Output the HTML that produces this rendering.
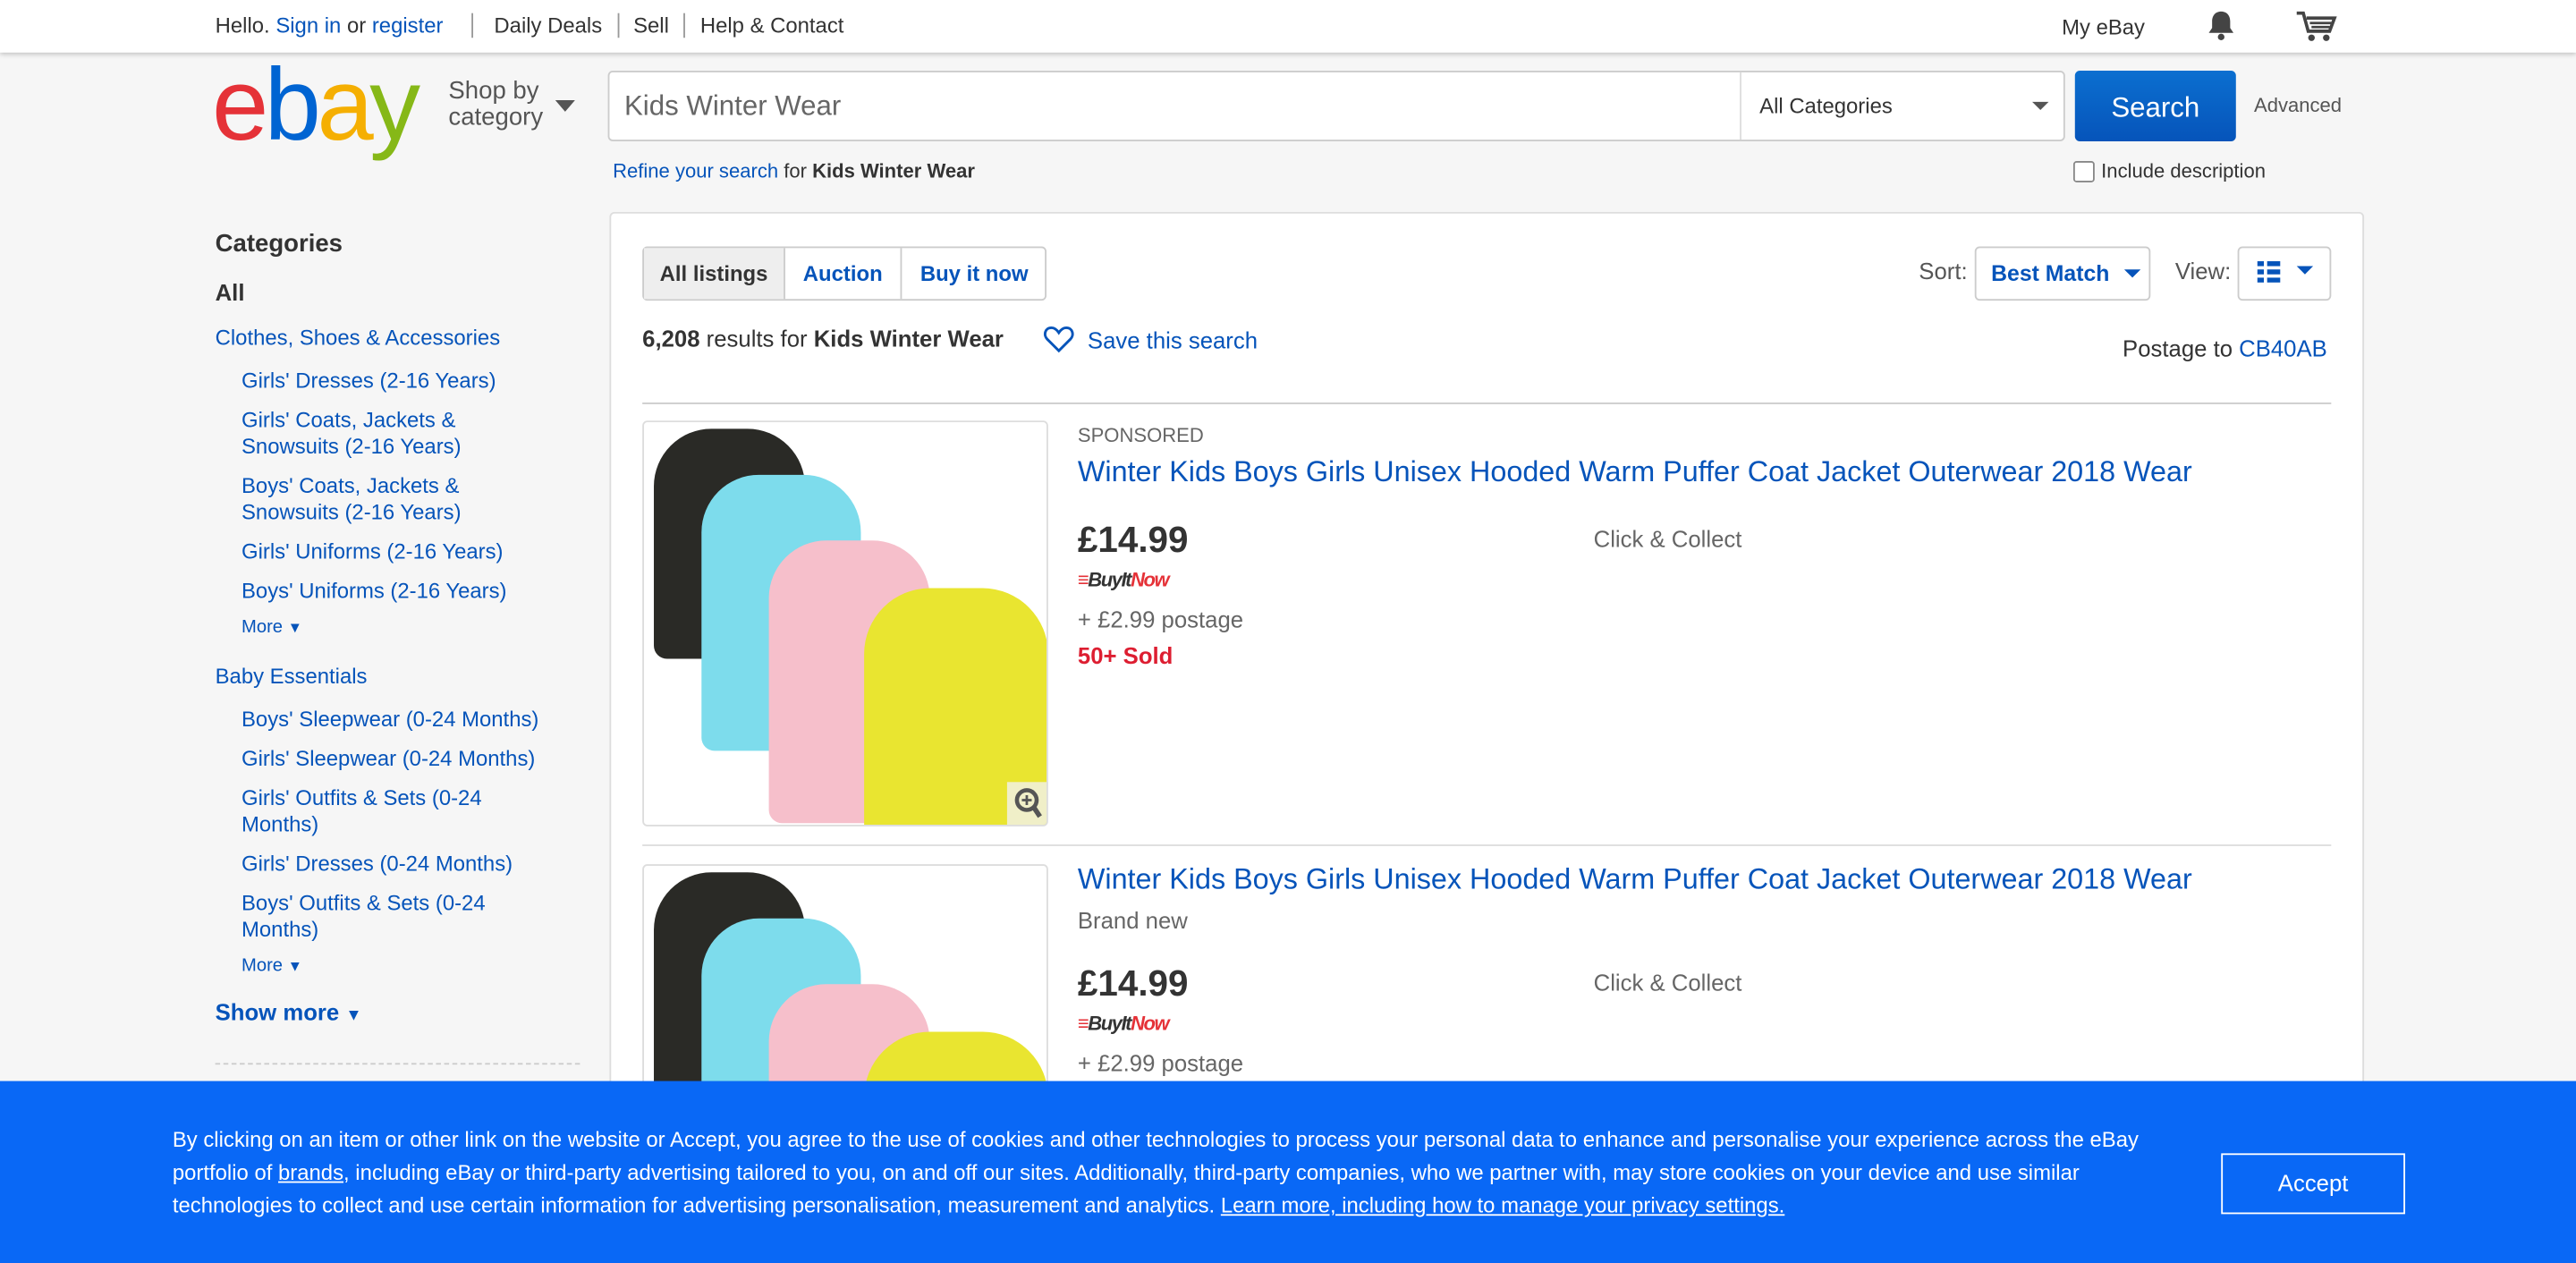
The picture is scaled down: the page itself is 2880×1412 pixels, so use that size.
<!DOCTYPE html>
<html><head><meta charset="utf-8"><style>
*{box-sizing:border-box;margin:0;padding:0}
html,body{width:2880px;height:1412px;overflow:hidden;background:#f6f6f6}
#w{position:absolute;left:0;top:0;width:1568px;height:769px;overflow:hidden;transform:scale(1.836735);transform-origin:0 0;font-family:"Liberation Sans",Arial,sans-serif;color:#333}
.a{position:absolute;white-space:nowrap}
.b{color:#0654ba}
</style></head><body><div id="w">
<div class="a" style="left:0;top:0;width:1568px;height:32px;background:#fff;box-shadow:0 1px 3px rgba(0,0,0,.25)"></div>
<div class="a" style="left:131px;top:8px;font-size:13px;color:#333">Hello. <span class="b">Sign in</span> or <span class="b">register</span><span style="display:inline-block;width:1px;height:15px;background:#999;margin:0 13px 0 17px;vertical-align:-3px"></span>Daily Deals<span style="display:inline-block;width:1px;height:15px;background:#999;margin:0 9px;vertical-align:-3px"></span>Sell<span style="display:inline-block;width:1px;height:15px;background:#999;margin:0 9px;vertical-align:-3px"></span>Help &amp; Contact</div>
<div class="a" style="left:1255px;top:9px;font-size:13px">My eBay</div>
<svg class="a" style="left:1343px;top:6px" width="18" height="19" viewBox="0 0 18 19"><path d="M9 1c-3.5 0-5.5 2.5-5.5 6v4L1.5 14h15l-2-3V7C14.5 3.5 12.5 1 9 1z" fill="#444"/><circle cx="9" cy="16.5" r="2" fill="#444"/></svg>
<svg class="a" style="left:1397px;top:6px" width="26" height="20" viewBox="0 0 26 20"><path d="M1 2h4l3 11h13l3-8H7" fill="none" stroke="#444" stroke-width="2"/><path d="M9 8h13M10 10.5h11" stroke="#444" stroke-width="1.5"/><circle cx="10" cy="17" r="2" fill="#444"/><circle cx="19" cy="17" r="2" fill="#444"/></svg>
<div class="a" style="left:129px;top:30px;font-size:62px;letter-spacing:-2.5px;line-height:70px"><span style="color:#e53238">e</span><span style="color:#0064d2">b</span><span style="color:#f5af02">a</span><span style="color:#86b817">y</span></div>
<div class="a" style="left:273px;top:48px;font-size:15px;line-height:16px;color:#555">Shop by<br>category</div>
<div class="a" style="left:338px;top:61px;width:0;height:0;border-left:6px solid transparent;border-right:6px solid transparent;border-top:7px solid #555"></div>
<div class="a" style="left:370px;top:43px;width:887px;height:43px;background:#fff;border:1px solid #ccc;border-radius:3px"></div>
<div class="a" style="left:380px;top:55px;font-size:17px;color:#666">Kids Winter Wear</div>
<div class="a" style="left:1059px;top:44px;width:1px;height:41px;background:#ddd"></div>
<div class="a" style="left:1071px;top:57px;font-size:13px;color:#333">All Categories</div>
<div class="a" style="left:1237px;top:62px;border-left:5px solid transparent;border-right:5px solid transparent;border-top:5px solid #555"></div>
<div class="a" style="left:1263px;top:43px;width:98px;height:43px;background:linear-gradient(#0b6fd0,#0654ba);border-radius:3px;color:#fff;font-size:17px;text-align:center;line-height:45px">Search</div>
<div class="a" style="left:1372px;top:57px;font-size:12px;color:#555">Advanced</div>
<div class="a" style="left:373px;top:97px;font-size:12px"><span class="b">Refine your search</span> for <b>Kids Winter Wear</b></div>
<div class="a" style="left:1262px;top:98px;width:13px;height:13px;border:1px solid #888;border-radius:2px;background:#fff"></div>
<div class="a" style="left:1279px;top:97px;font-size:12px">Include description</div>
<div class="a" style="left:131px;top:141px;font-size:13px;line-height:16px">
<div style="font-size:15px;font-weight:bold;color:#333">Categories</div>
<div style="font-size:14px;font-weight:bold;margin-top:13px">All</div>
<div class="b" style="margin-top:12px">Clothes, Shoes &amp; Accessories</div>
<div class="b" style="margin:10px 0 0 16px">Girls' Dresses (2-16 Years)</div>
<div class="b" style="margin:8px 0 0 16px">Girls' Coats, Jackets &amp;<br>Snowsuits (2-16 Years)</div>
<div class="b" style="margin:8px 0 0 16px">Boys' Coats, Jackets &amp;<br>Snowsuits (2-16 Years)</div>
<div class="b" style="margin:8px 0 0 16px">Girls' Uniforms (2-16 Years)</div>
<div class="b" style="margin:8px 0 0 16px">Boys' Uniforms (2-16 Years)</div>
<div class="b" style="margin:6px 0 0 16px;font-size:11px">More <span style="font-size:9px">▼</span></div>
<div class="b" style="margin-top:14px">Baby Essentials</div>
<div class="b" style="margin:10px 0 0 16px">Boys' Sleepwear (0-24 Months)</div>
<div class="b" style="margin:8px 0 0 16px">Girls' Sleepwear (0-24 Months)</div>
<div class="b" style="margin:8px 0 0 16px">Girls' Outfits &amp; Sets (0-24<br>Months)</div>
<div class="b" style="margin:8px 0 0 16px">Girls' Dresses (0-24 Months)</div>
<div class="b" style="margin:8px 0 0 16px">Boys' Outfits &amp; Sets (0-24<br>Months)</div>
<div class="b" style="margin:6px 0 0 16px;font-size:11px">More <span style="font-size:9px">▼</span></div>
<div class="b" style="margin-top:12px;font-size:14px;font-weight:bold">Show more <span style="font-size:10px">▼</span></div>
</div>
<div class="a" style="left:131px;top:647px;width:222px;border-top:1px dashed #ccc"></div>
<div class="a" style="left:371px;top:129px;width:1068px;height:640px;background:#fff;border:1px solid #ddd;border-radius:3px"></div>
<div class="a" style="left:391px;top:150px;width:246px;height:33px;border:1px solid #ccc;border-radius:3px;background:#fff;font-size:13px;font-weight:bold;line-height:31px">
<span style="position:absolute;left:0;top:0;width:86px;height:31px;background:#eee;border-right:1px solid #ccc;text-align:center;color:#333">All listings</span>
<span class="b" style="position:absolute;left:86px;top:0;width:71px;text-align:center;border-right:1px solid #ccc;height:31px">Auction</span>
<span class="b" style="position:absolute;left:157px;top:0;width:88px;text-align:center">Buy it now</span></div>
<div class="a" style="left:1168px;top:157px;font-size:14px;color:#555">Sort:</div>
<div class="a" style="left:1202px;top:150px;width:107px;height:33px;border:1px solid #ccc;border-radius:3px;font-size:13.5px;font-weight:bold;line-height:31px;padding-left:9px"><span class="b">Best Match</span></div>
<div class="a" style="left:1293px;top:164px;border-left:5px solid transparent;border-right:5px solid transparent;border-top:5px solid #0654ba"></div>
<div class="a" style="left:1324px;top:157px;font-size:14px;color:#555">View:</div>
<div class="a" style="left:1362px;top:150px;width:57px;height:33px;border:1px solid #ccc;border-radius:3px"></div>
<svg class="a" style="left:1374px;top:159px" width="14" height="13"><g fill="#0654ba"><rect x="0" y="0" width="4" height="3"/><rect x="6" y="0" width="8" height="3"/><rect x="0" y="5" width="4" height="3"/><rect x="6" y="5" width="8" height="3"/><rect x="0" y="10" width="4" height="3"/><rect x="6" y="10" width="8" height="3"/></g></svg>
<div class="a" style="left:1398px;top:162px;border-left:5px solid transparent;border-right:5px solid transparent;border-top:5px solid #0654ba"></div>
<div class="a" style="left:391px;top:198px;font-size:14px"><b>6,208</b> results for <b>Kids Winter Wear</b></div>
<svg class="a" style="left:635px;top:198px" width="19" height="17" viewBox="0 0 19 17"><path d="M9.5 15.5L2.5 8.5C0 6 1 1.5 5 1.5c2 0 3.5 1.5 4.5 3 1-1.5 2.5-3 4.5-3 4 0 5 4.5 2.5 7z" fill="none" stroke="#0654ba" stroke-width="1.6"/></svg>
<div class="a b" style="left:662px;top:199px;font-size:14px">Save this search</div>
<div class="a" style="left:1292px;top:204px;font-size:14px">Postage to <span class="b">CB40AB</span></div>
<div class="a" style="left:391px;top:245px;width:1028px;height:1px;background:#ccc"></div>
<div class="a" style="left:391px;top:514px;width:1028px;height:1px;background:#ddd"></div>
<div class="a" style="left:391px;top:256px;width:247px;height:247px;border:1px solid #ddd;border-radius:3px;overflow:hidden;background:#fff">
<div style="position:absolute;left:6px;top:4px;width:92px;height:140px;background:#2a2a26;border-radius:35px 35px 8px 8px"></div>
<div style="position:absolute;left:35px;top:32px;width:97px;height:168px;background:#7ddcec;border-radius:35px 35px 8px 8px"></div>
<div style="position:absolute;left:76px;top:72px;width:98px;height:172px;background:#f6bfcb;border-radius:35px 35px 8px 8px"></div>
<div style="position:absolute;left:134px;top:101px;width:112px;height:150px;background:#e9e530;border-radius:40px 40px 6px 6px"></div>
<div style="position:absolute;left:221px;top:219px;width:25px;height:27px;background:#f0efc8"></div>
<svg style="position:absolute;left:225px;top:222px" width="18" height="20"><circle cx="8" cy="8" r="6" fill="none" stroke="#555" stroke-width="2.5"/><path d="M12 12l4 6" stroke="#555" stroke-width="3"/><path d="M8 5v6M5 8h6" stroke="#555" stroke-width="1.5"/></svg>
</div>
<div class="a" style="left:391px;top:526px;width:247px;height:243px;border:1px solid #ddd;border-radius:3px;overflow:hidden;background:#fff">
<div style="position:absolute;left:6px;top:4px;width:92px;height:140px;background:#2a2a26;border-radius:35px 35px 8px 8px"></div>
<div style="position:absolute;left:35px;top:32px;width:97px;height:168px;background:#7ddcec;border-radius:35px 35px 8px 8px"></div>
<div style="position:absolute;left:76px;top:72px;width:98px;height:172px;background:#f6bfcb;border-radius:35px 35px 8px 8px"></div>
<div style="position:absolute;left:134px;top:101px;width:112px;height:150px;background:#e9e530;border-radius:40px 40px 6px 6px"></div>
</div>
<div class="a" style="left:656px;top:258px;font-size:12px;color:#666">SPONSORED</div>
<div class="a b" style="left:656px;top:277px;font-size:17.6px">Winter Kids Boys Girls Unisex Hooded Warm Puffer Coat Jacket Outerwear 2018 Wear</div>
<div class="a" style="left:656px;top:316px;font-size:22px;font-weight:bold">£14.99</div>
<div class="a" style="left:656px;top:346px;font-size:12px;font-style:italic;font-weight:bold;letter-spacing:-.8px"><span style="color:#e53238">≡</span><span style="color:#333">BuyIt</span><span style="color:#e53238">Now</span></div>
<div class="a" style="left:656px;top:369px;font-size:14px;color:#666">+ £2.99 postage</div>
<div class="a" style="left:656px;top:391px;font-size:14px;font-weight:bold;color:#dd1e31">50+ Sold</div>
<div class="a" style="left:970px;top:320px;font-size:14px;color:#666">Click &amp; Collect</div>
<div class="a b" style="left:656px;top:525px;font-size:17.6px">Winter Kids Boys Girls Unisex Hooded Warm Puffer Coat Jacket Outerwear 2018 Wear</div>
<div class="a" style="left:656px;top:552px;font-size:14px;color:#666">Brand new</div>
<div class="a" style="left:656px;top:586px;font-size:22px;font-weight:bold">£14.99</div>
<div class="a" style="left:656px;top:616px;font-size:12px;font-style:italic;font-weight:bold;letter-spacing:-.8px"><span style="color:#e53238">≡</span><span style="color:#333">BuyIt</span><span style="color:#e53238">Now</span></div>
<div class="a" style="left:656px;top:639px;font-size:14px;color:#666">+ £2.99 postage</div>
<div class="a" style="left:970px;top:590px;font-size:14px;color:#666">Click &amp; Collect</div>
<div class="a" style="left:0;top:658px;width:1568px;height:111px;background:#0968f6"></div>
<div class="a" style="left:105px;top:684px;font-size:13px;line-height:20px;color:#fff;white-space:normal;width:1220px">By clicking on an item or other link on the website or Accept, you agree to the use of cookies and other technologies to process your personal data to enhance and personalise your experience across the eBay portfolio of <u>brands</u>, including eBay or third-party advertising tailored to you, on and off our sites. Additionally, third-party companies, who we partner with, may store cookies on your device and use similar technologies to collect and use certain information for advertising personalisation, measurement and analytics. <u>Learn more, including how to manage your privacy settings.</u></div>
<div class="a" style="left:1352px;top:702px;width:112px;height:37px;border:1.5px solid #fff;color:#fff;font-size:14px;text-align:center;line-height:34px">Accept</div>
</div></body></html>
